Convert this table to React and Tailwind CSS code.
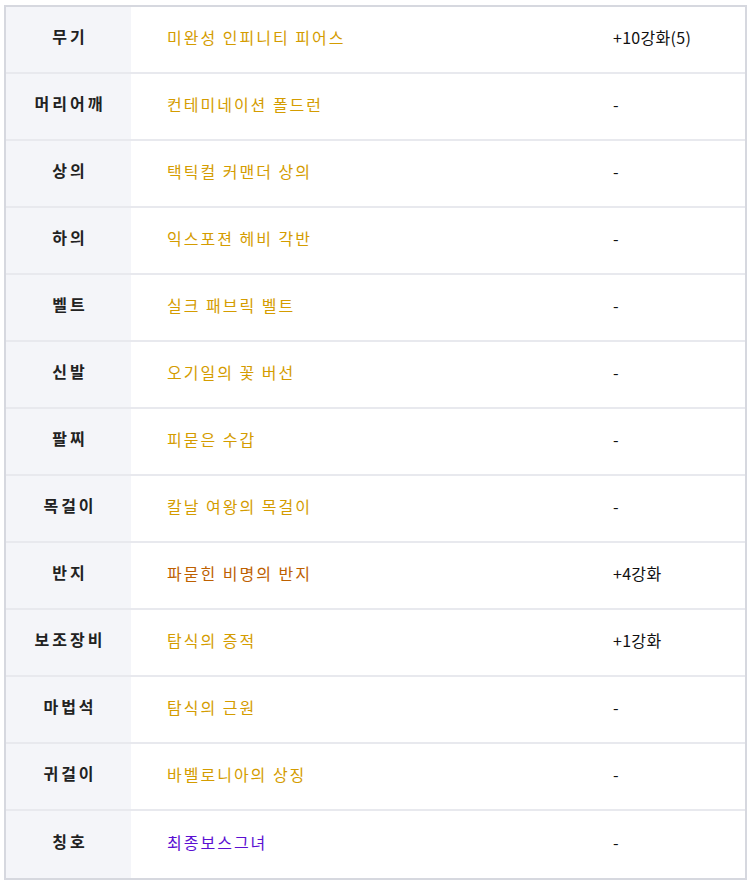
const rows = [
  { slot: '무기', name: '미완성 인피니티 피어스', color: 'text-[#d49c00]', upgrade: '+10강화(5)' },
  { slot: '머리어깨', name: '컨테미네이션 폴드런', color: 'text-[#d49c00]', upgrade: '-' },
  { slot: '상의', name: '택틱컬 커맨더 상의', color: 'text-[#d49c00]', upgrade: '-' },
  { slot: '하의', name: '익스포젼 헤비 각반', color: 'text-[#d49c00]', upgrade: '-' },
  { slot: '벨트', name: '실크 패브릭 벨트', color: 'text-[#d49c00]', upgrade: '-' },
  { slot: '신발', name: '오기일의 꽃 버선', color: 'text-[#d49c00]', upgrade: '-' },
  { slot: '팔찌', name: '피묻은 수갑', color: 'text-[#d49c00]', upgrade: '-' },
  { slot: '목걸이', name: '칼날 여왕의 목걸이', color: 'text-[#d49c00]', upgrade: '-' },
  { slot: '반지', name: '파묻힌 비명의 반지', color: 'text-[#bd6000]', upgrade: '+4강화' },
  { slot: '보조장비', name: '탐식의 증적', color: 'text-[#d49c00]', upgrade: '+1강화' },
  { slot: '마법석', name: '탐식의 근원', color: 'text-[#d49c00]', upgrade: '-' },
  { slot: '귀걸이', name: '바벨로니아의 상징', color: 'text-[#d49c00]', upgrade: '-' },
  { slot: '칭호', name: '최종보스그녀', color: 'text-[#5b0fd2]', upgrade: '-' },
];

export default function App() {
  return (
    <div className="min-h-screen bg-white pl-[4px] pt-[5px] font-['Noto_Sans_CJK_KR',sans-serif]">
      <div className="w-[743px] border-2 border-[#d6d8df] bg-white">
        {rows.map((row, i) => (
          <div
            key={row.slot}
            className={
              i === rows.length - 1
                ? 'flex h-[67px] items-stretch'
                : 'flex h-[67px] items-stretch border-b-2 border-[#e8e9ee]'
            }
          >
            <div className="flex w-[125px] items-center justify-center bg-[#f4f5f9] pb-[8px] pl-[3px] text-[16px] font-bold tracking-[3px] text-[#222]">
              {row.slot}
            </div>
            <div className={`flex w-[446px] items-center pb-[5px] pl-[36px] text-[16px] tracking-[2px] ${row.color}`}>
              {row.name}
            </div>
            <div className="flex flex-1 items-center pb-[5px] pl-[36px] text-[16px] tracking-[0.3px] text-[#111]">
              {row.upgrade}
            </div>
          </div>
        ))}
      </div>
    </div>
  );
}
